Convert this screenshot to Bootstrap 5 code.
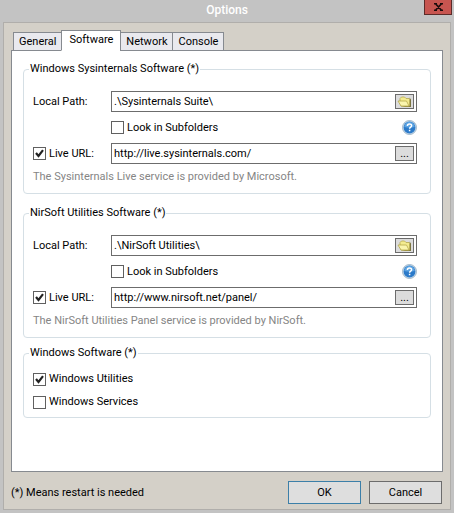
<!DOCTYPE html>
<html lang="en">
<head>
<meta charset="utf-8">
<meta name="viewport" content="width=device-width, initial-scale=1">
<title>Options</title>
<link href="https://cdn.jsdelivr.net/npm/bootstrap@5.3.0/dist/css/bootstrap.min.css" rel="stylesheet">
<style>
body { font: 11px/16px Tahoma, Roboto, sans-serif; color: #000; background: #c3c3c3; }
.window { padding: 0 3px 3px; }
.titlebar { height: 22px; color: #fff; }
.titlebar h1 { font-size: 12px; line-height: 20px; font-weight: 500; }
.close-box { top: 0; right: -1px; width: 28px; height: 15px; background: #c75550; border: 1px solid #5c2b29; border-top: 0; }
.client { background: #d4d0c8; border: 1px solid #b0aeab; padding: 7px 7px 5px; }
.tab-strip { padding-left: 3px; margin-bottom: -1px; z-index: 1; }
.tab-strip .nav-link { height: 19px; padding: 0 5px; line-height: 18px; color: #000; background: #e9e9ee; border: 1px solid #868a90; border-radius: 0; margin: 0 0 0 -1px; white-space: nowrap; }
.tab-strip .nav-link.active { height: 21px; padding: 0 7px; color: #000; background: #fff; border-color: #868a90 #868a90 #fff; }
.panel { background: #fff; border: 1px solid #868a90; padding: 10px 11px; }
.group { border: 1px solid #d5dfe5; border-radius: 4px; padding: 0 13px 3px 9px; }
.group legend { float: none; width: auto; font-size: 11px; line-height: 16px; margin: 0 0 0 -4px; padding: 0 1px; white-space: nowrap; }
.group-paths { padding-top: 14px; }
.caption { width: 78px; flex: none; }
.middle-row { height: 31px; }
.field { height: 21px; border: 1px solid #6c6c6c; background: #fff; padding: 0 2px; }
.field input { font: inherit; line-height: 19px; color: #000; border: 0; padding: 0; outline-offset: -1px; min-width: 0; }
.field button { width: 19px; height: 15px; background: #dcdcdc; border: 1px solid #6c6c6c; padding: 0; flex: none; }
.tick { appearance: none; width: 13px; height: 13px; flex: none; border: 1px solid #606060; background: #fff; margin: 0; }
.tick:checked { background: #fff url("data:image/svg+xml,%3Csvg xmlns='http://www.w3.org/2000/svg' viewBox='0 0 11 11'%3E%3Cpath d='M2 5l2.500 3L9 2.200' fill='none' stroke='%23222' stroke-width='2.200'/%3E%3C/svg%3E"); }
.check-line { gap: 3px; white-space: nowrap; }
.help { width: 15px; height: 15px; }
.note { line-height: 26px; color: #858585; white-space: nowrap; }
.group-list { padding: 10px 0 4px; gap: 7px; }
.gap-wide { margin-bottom: 11px; }
.gap-narrow { margin-bottom: 7px; }
.footer-bar { padding: 9px 1px 0 0; }
.push { width: 73px; height: 23px; font-size: 11px; line-height: 16px; padding: 0; border: 1px solid #6c6c6c; border-radius: 0; background: #dedede; color: #000; }
.push-default { border-color: #3c7fa8; }
</style>
</head>
<body>
<svg class="d-none" aria-hidden="true">
  <symbol id="folder" viewBox="0 0 15 13">
    <path d="M4 12h10V4.500l-1.500-2V10z" fill="#7d7640"/>
    <path d="M3 8V3.500L4.500 2h3L9 3.500h3l.5 1v6.500H4z" fill="#f3eb8f" stroke="#b5a84c" stroke-width=".8"/>
    <path d="M1 6h8.500l2.500 5H4z" fill="#faf5ae" stroke="#b5a84c" stroke-width=".8"/>
  </symbol>
  <symbol id="question" viewBox="0 0 15 15">
    <circle cx="7.500" cy="7.500" r="7" fill="#c9dcec" stroke="#8fa9bf" stroke-width=".8"/>
    <circle cx="7.500" cy="7.500" r="5.900" fill="#2b7ac9"/>
    <path d="M2.300 7a5.200 5.200 0 0 1 10.400 0Q7.500 8.500 2.300 7z" fill="#5ba3e2"/>
    <path d="M5.400 5.900C5.400 3.200 9.600 3.300 9.600 5.700c0 1.500-2 1.400-2 3M7.600 9.800v1.500" fill="none" stroke="#fff" stroke-width="1.500"/>
  </symbol>
</svg>
<div class="window d-flex flex-column min-vh-100">
  <header class="titlebar position-relative text-center">
    <h1 class="m-0">Options</h1>
    <button type="button" class="close-box position-absolute p-0 d-flex align-items-center justify-content-center" aria-label="Close">
      <svg width="9" height="8" viewBox="0 0 9 8"><path d="M0 .7h3M6 .7h3M0 7.300h3M6 7.300h3M1.500.7l6 6.600M7.500.7l-6 6.600" fill="none" stroke="#1c0c0c" stroke-width="1.700"/></svg>
    </button>
  </header>
  <main class="client d-flex flex-column flex-grow-1">
    <nav class="tab-strip nav flex-nowrap align-items-end position-relative" aria-label="Option pages">
      <a class="nav-link" href="#general">General</a>
      <a class="nav-link active" href="#software" aria-current="page">Software</a>
      <a class="nav-link" href="#network">Network</a>
      <a class="nav-link" href="#console">Console</a>
    </nav>
    <section class="panel flex-grow-1" id="software">
      <fieldset class="group gap-wide">
        <legend>Windows Sysinternals Software (*)</legend>
        <div class="group-paths">
          <div class="d-flex align-items-center">
            <label class="caption" for="sysPath">Local Path:</label>
            <div class="field d-flex align-items-center flex-grow-1">
              <input class="flex-grow-1" type="text" id="sysPath" value=".\Sysinternals Suite\">
              <button type="button" class="d-flex align-items-center justify-content-center" aria-label="Browse folder"><svg width="15" height="13"><use href="#folder"/></svg></button>
            </div>
          </div>
          <div class="middle-row d-flex align-items-center">
            <span class="caption"></span>
            <div class="check-line d-flex align-items-center">
              <input class="tick" type="checkbox" id="sysSub"><label for="sysSub">Look in Subfolders</label>
            </div>
            <a class="ms-auto d-flex" href="#help" aria-label="Help"><svg class="help"><use href="#question"/></svg></a>
          </div>
          <div class="d-flex align-items-center">
            <div class="caption check-line d-flex align-items-center">
              <input class="tick" type="checkbox" id="sysLive" checked><label for="sysLive">Live URL:</label>
            </div>
            <div class="field d-flex align-items-center flex-grow-1">
              <input class="flex-grow-1" type="text" aria-label="Sysinternals live URL" value="http://live.sysinternals.com/">
              <button type="button" class="d-flex align-items-center justify-content-center" aria-label="More">...</button>
            </div>
          </div>
          <p class="note m-0">The Sysinternals Live service is provided by Microsoft.</p>
        </div>
      </fieldset>
      <fieldset class="group gap-narrow">
        <legend>NirSoft Utilities Software (*)</legend>
        <div class="group-paths">
          <div class="d-flex align-items-center">
            <label class="caption" for="nirPath">Local Path:</label>
            <div class="field d-flex align-items-center flex-grow-1">
              <input class="flex-grow-1" type="text" id="nirPath" value=".\NirSoft Utilities\">
              <button type="button" class="d-flex align-items-center justify-content-center" aria-label="Browse folder"><svg width="15" height="13"><use href="#folder"/></svg></button>
            </div>
          </div>
          <div class="middle-row d-flex align-items-center">
            <span class="caption"></span>
            <div class="check-line d-flex align-items-center">
              <input class="tick" type="checkbox" id="nirSub"><label for="nirSub">Look in Subfolders</label>
            </div>
            <a class="ms-auto d-flex" href="#help" aria-label="Help"><svg class="help"><use href="#question"/></svg></a>
          </div>
          <div class="d-flex align-items-center">
            <div class="caption check-line d-flex align-items-center">
              <input class="tick" type="checkbox" id="nirLive" checked><label for="nirLive">Live URL:</label>
            </div>
            <div class="field d-flex align-items-center flex-grow-1">
              <input class="flex-grow-1" type="text" aria-label="NirSoft live URL" value="http://www.nirsoft.net/panel/">
              <button type="button" class="d-flex align-items-center justify-content-center" aria-label="More">...</button>
            </div>
          </div>
          <p class="note m-0">The NirSoft Utilities Panel service is provided by NirSoft.</p>
        </div>
      </fieldset>
      <fieldset class="group">
        <legend>Windows Software (*)</legend>
        <div class="group-list d-flex flex-column">
          <div class="check-line d-flex align-items-center">
            <input class="tick" type="checkbox" id="winUtil" checked><label for="winUtil">Windows Utilities</label>
          </div>
          <div class="check-line d-flex align-items-center">
            <input class="tick" type="checkbox" id="winServ"><label for="winServ">Windows Services</label>
          </div>
        </div>
      </fieldset>
    </section>
    <footer class="footer-bar d-flex align-items-center gap-2">
      <span class="me-auto">(*) Means restart is needed</span>
      <button type="button" class="btn push push-default">OK</button>
      <button type="button" class="btn push">Cancel</button>
    </footer>
  </main>
</div>
<script src="https://cdn.jsdelivr.net/npm/bootstrap@5.3.0/dist/js/bootstrap.bundle.min.js"></script>
</body>
</html>
